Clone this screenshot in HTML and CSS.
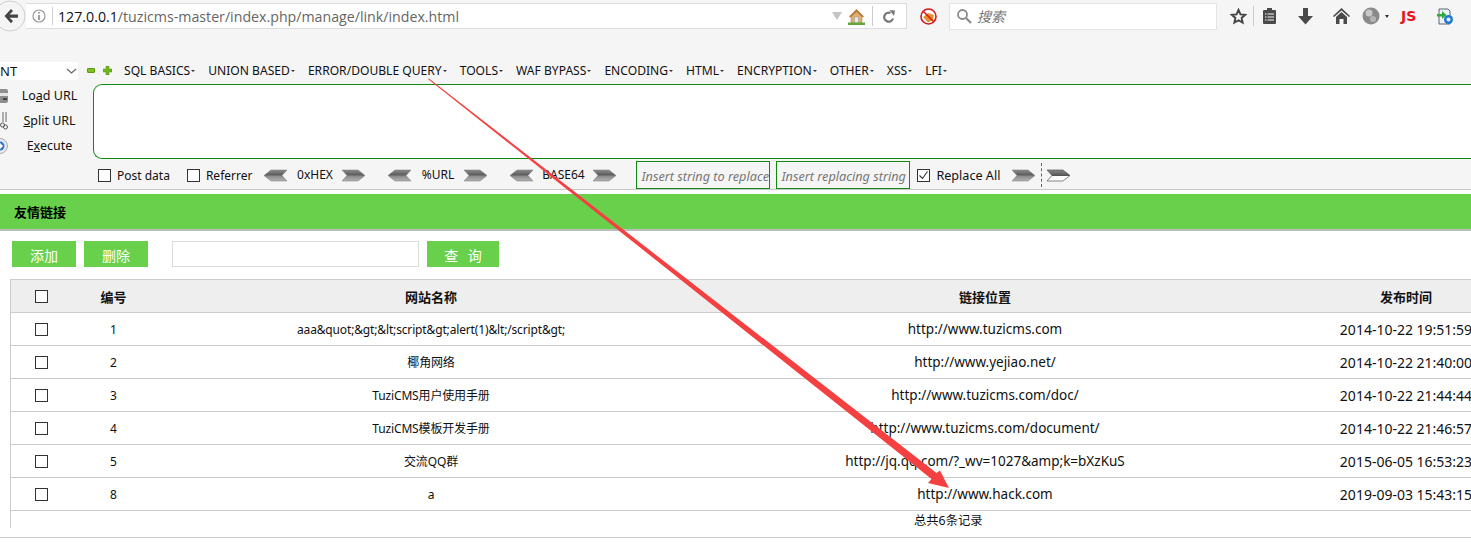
FILE: index.html
```html
<!DOCTYPE html>
<html lang="zh-CN">
<head>
	<meta charset="UTF-8">
	<title>友情链接</title>
	<link rel="stylesheet" href="styles.css">
</head>
<body>
	<svg class="defs" width="0" height="0">
		<defs>
			<linearGradient id="grey" x1="0" y1="0" x2="0" y2="1">
				<stop offset="0" stop-color="#8c8c8c"/>
				<stop offset="0.45" stop-color="#5c5c5c"/>
				<stop offset="0.55" stop-color="#8a8a8a"/>
				<stop offset="1" stop-color="#b4b4b4"/>
			</linearGradient>
			<linearGradient id="grey-white" x1="0" y1="0" x2="0" y2="1">
				<stop offset="0" stop-color="#888"/>
				<stop offset="0.5" stop-color="#555"/>
				<stop offset="0.55" stop-color="#fff"/>
				<stop offset="1" stop-color="#fff"/>
			</linearGradient>
			<symbol id="chev-r" viewBox="0 0 23 13"><path d="M0 1h16l7 5.500-7 5.500H0l5-5.500z" fill="url(#grey)" stroke="#777" stroke-width=".5"/></symbol>
			<symbol id="chev-l" viewBox="0 0 23 13"><path d="M23 1H7L0 6.500 7 12h16l-5-5.500z" fill="url(#grey)" stroke="#777" stroke-width=".5"/></symbol>
		</defs>
	</svg>

	<!-- browser bar -->
	<div class="navbar">
		<svg class="back" width="26" height="33" viewBox="0 0 26 33"><circle cx="10" cy="16" r="15" fill="#f5f5f5" stroke="#cfcfcf"/><path d="M11 9l2 2-3.500 3.500H18v3.200H9.500L13 21l-2 2.200L4.500 16z" fill="#444"/></svg>
		<div class="urlbar">
			<svg class="info" width="14" height="14" viewBox="0 0 14 14"><circle cx="7" cy="7" r="6" fill="none" stroke="#999" stroke-width="1.200"/><path d="M6.200 3h1.600v1.600H6.200zM6.200 6h1.600v5H6.200z" fill="#888"/></svg>
			<span class="sep"></span>
			<div class="url"><b>127.0.0.1</b>/tuzicms-master/index.php/manage/link/index.html</div>
			<span class="dropmark"></span>
			<svg class="house" width="17" height="17" viewBox="0 0 17 17"><path d="M8.500 1L1 8.500l1.500 1L8.500 4l6 5.500 1.500-1z" fill="#b9793a"/><path d="M3 9l5.500-5L14 9v6H3z" fill="#e0b070" stroke="#a87238" stroke-width=".5"/><rect x="6.500" y="9" width="4" height="6" fill="#e8e8e8" stroke="#888" stroke-width=".4"/><rect x="0" y="14.500" width="17" height="2.500" fill="#62a83e"/></svg>
			<span class="sep sep-tall"></span>
			<svg class="reload" width="12" height="13" viewBox="0 0 12 13"><path d="M10 8.500A4.500 4.500 0 1 1 7.500 3" fill="none" stroke="#777" stroke-width="2.200"/><path d="M6.500 0L12 .5 11 6z" fill="#777"/></svg>
		</div>
		<svg class="noscript" width="17" height="17" viewBox="0 0 17 17"><circle cx="8.500" cy="8.500" r="7.500" fill="#fff" stroke="#d81818" stroke-width="1.600"/><path d="M3 9l5-4 6 2-1 5-5 2.500z" fill="#e3902e"/><path d="M3.200 3.200l10.600 10.600" stroke="#d81818" stroke-width="1.500"/></svg>
		<div class="searchbar">
			<svg width="16" height="16" viewBox="0 0 16 16"><circle cx="6.500" cy="6.500" r="4.500" fill="none" stroke="#8a8a8a" stroke-width="1.800"/><path d="M10 10l5 5" stroke="#8a8a8a" stroke-width="2.200"/></svg>
			<span>搜索</span>
		</div>
		<div class="tools">
			<svg width="17" height="17" viewBox="0 0 18 18"><path d="M9 2l2.100 4.700 5 .5-3.800 3.300 1.100 5L9 13l-4.400 2.500 1.100-5L1.900 7.200l5-.5z" fill="none" stroke="#444" stroke-width="2"/></svg>
			<span class="tool-sep"></span>
			<svg class="t-list" width="15" height="16" viewBox="0 0 15 16"><path d="M1 3a1 1 0 0 1 1-1h3V0h5v2h3a1 1 0 0 1 1 1v12a1 1 0 0 1-1 1H2a1 1 0 0 1-1-1z" fill="#4a4a4a"/><path d="M3 6h9M3 9h9M3 12h9" stroke="#f5f5f5" stroke-width="1.200"/><path d="M5 5v8" stroke="#4a4a4a" stroke-width="1"/></svg>
			<svg class="t-down" width="15" height="17" viewBox="0 0 15 17"><path d="M5 0h5v8h5l-7.500 8.500L0 8h5z" fill="#4a4a4a"/></svg>
			<svg class="t-home" width="17" height="16" viewBox="0 0 17 16"><path d="M8.500 0L0 8l1 1 7.500-6.500L16 9l1-1z" fill="#4a4a4a"/><path d="M3 9l5.500-5L14 9v7h-3.500v-5h-4v5H3z" fill="#4a4a4a"/></svg>
			<svg class="t-globe" width="18" height="18" viewBox="0 0 18 18"><circle cx="9" cy="9" r="8.500" fill="#8a8a8a"/><circle cx="7" cy="6" r="3.500" fill="#c8c8c8"/><circle cx="11" cy="12" r="3" fill="#b4b4b4"/></svg>
			<span class="t-caret"></span>
			<span class="t-js">JS</span>
			<svg class="t-ie" width="16" height="17" viewBox="0 0 16 17"><path d="M2 1h9l2 2v13H2z" fill="#eef2f8" stroke="#567" stroke-width="1"/><circle cx="11.500" cy="11.500" r="4.500" fill="#1f78d0"/><circle cx="11.500" cy="11.500" r="2" fill="#e8f2ff"/><path d="M0 6h5V3l4.500 4L5 11V8.500H0z" fill="#35a83a"/></svg>
		</div>
	</div>

	<!-- hackbar -->
	<div class="hackbar">
		<div class="hack-menu">
			<div class="fake-select"><span>NT</span><svg width="11" height="6" viewBox="0 0 11 6"><path d="M1 1l4.500 4L10 1" fill="none" stroke="#666" stroke-width="1.200"/></svg></div>
			<span class="minus"></span>
			<svg class="plus" width="9" height="9" viewBox="0 0 9 9"><path d="M3 0h3v3h3v3H6v3H3V6H0V3h3z" fill="#6fb81e" stroke="#4c8a10" stroke-width=".5"/></svg>
			<ul class="menu">
				<li>SQL BASICS</li>
				<li>UNION BASED</li>
				<li>ERROR/DOUBLE QUERY</li>
				<li>TOOLS</li>
				<li>WAF BYPASS</li>
				<li>ENCODING</li>
				<li>HTML</li>
				<li>ENCRYPTION</li>
				<li>OTHER</li>
				<li>XSS</li>
				<li>LFI</li>
			</ul>
		</div>
		<div class="hack-main">
			<div class="hack-side">
				<div class="side-row">
					<svg width="9" height="16" viewBox="0 0 9 16"><rect x="-8" y="1" width="16" height="14" rx="2" fill="#8e8e8e"/><rect x="-8" y="5" width="16" height="3" fill="#e4e4e4"/><rect x="3" y="10" width="4" height="2" fill="#444"/></svg>
					<span class="side-label">Lo<u>a</u>d URL</span>
				</div>
				<div class="side-row">
					<svg width="9" height="18" viewBox="0 0 9 18"><path d="M3 0v10M6 0v10" stroke="#666" stroke-width="1"/><circle cx="2.500" cy="13" r="2" fill="none" stroke="#555"/><circle cx="5.500" cy="15" r="2" fill="none" stroke="#555"/></svg>
					<span class="side-label"><u>S</u>plit URL</span>
				</div>
				<div class="side-row">
					<svg width="9" height="16" viewBox="0 0 9 16"><circle cx="0" cy="8" r="7.500" fill="#e6ebf2" stroke="#aab"/><circle cx="0" cy="8" r="4.500" fill="#3b78c4"/><path d="M0 5l3 3-3 3z" fill="#fff"/></svg>
					<span class="side-label">E<u>x</u>ecute</span>
				</div>
			</div>
			<div class="hack-input"></div>
		</div>
		<div class="hack-opts">
			<label class="opt"><span class="check"></span>Post data</label>
			<label class="opt opt-ref"><span class="check"></span>Referrer</label>
			<svg class="chev first" width="23" height="13"><use href="#chev-l"/></svg>
			<span class="enc enc-hex">0xHEX</span>
			<svg class="chev" width="23" height="13"><use href="#chev-r"/></svg>
			<svg class="chev gap-l" width="23" height="13"><use href="#chev-l"/></svg>
			<span class="enc enc-url">%URL</span>
			<svg class="chev" width="23" height="13"><use href="#chev-r"/></svg>
			<svg class="chev gap-l" width="23" height="13"><use href="#chev-l"/></svg>
			<span class="enc enc-b64">BASE64</span>
			<svg class="chev" width="23" height="13"><use href="#chev-r"/></svg>
			<div class="rep rep-a">Insert string to replace</div>
			<div class="rep rep-b">Insert replacing string</div>
			<label class="opt opt-all"><span class="check"><svg width="11" height="11" viewBox="0 0 11 11"><path d="M1.500 5.500l3 3 5-7" fill="none" stroke="#333" stroke-width="1.100"/></svg></span>Replace All</label>
			<svg class="chev gap-all" width="23" height="13"><use href="#chev-r"/></svg>
			<span class="dash"></span>
			<svg class="chev" width="23" height="13" viewBox="0 0 23 13"><path d="M0 1h16l7 5.500-7 5.500H0l5-5.500z" fill="url(#grey-white)" stroke="#555" stroke-width=".7"/></svg>
		</div>
	</div>

	<!-- page -->
	<div class="title-bar">友情链接</div>
	<div class="actions">
		<button class="btn">添加</button>
		<button class="btn">删除</button>
		<div class="search-box"></div>
		<button class="btn btn-query">查 询</button>
	</div>

	<div class="list-wrap">
		<table class="list">
			<colgroup>
				<col class="c-check"><col class="c-num"><col class="c-name"><col class="c-link"><col class="c-time">
			</colgroup>
			<thead>
				<tr>
					<th><span class="check"></span></th>
					<th>编号</th>
					<th>网站名称</th>
					<th>链接位置</th>
					<th>发布时间</th>
				</tr>
			</thead>
			<tbody>
				<tr><td><span class="check"></span></td><td>1</td><td>aaa&amp;quot;&amp;gt;&amp;lt;script&amp;gt;alert(1)&amp;lt;/script&amp;gt;</td><td>http://www.tuzicms.com</td><td>2014-10-22 19:51:59</td></tr>
				<tr><td><span class="check"></span></td><td>2</td><td>椰角网络</td><td>http://www.yejiao.net/</td><td>2014-10-22 21:40:00</td></tr>
				<tr><td><span class="check"></span></td><td>3</td><td>TuziCMS用户使用手册</td><td>http://www.tuzicms.com/doc/</td><td>2014-10-22 21:44:44</td></tr>
				<tr><td><span class="check"></span></td><td>4</td><td>TuziCMS模板开发手册</td><td>http://www.tuzicms.com/document/</td><td>2014-10-22 21:46:57</td></tr>
				<tr><td><span class="check"></span></td><td>5</td><td>交流QQ群</td><td>http://jq.qq.com/?_wv=1027&amp;amp;k=bXzKuS</td><td>2015-06-05 16:53:23</td></tr>
				<tr><td><span class="check"></span></td><td>8</td><td>a</td><td>http://www.hack.com</td><td>2019-09-03 15:43:15</td></tr>
			</tbody>
		</table>
	</div>
	<div class="pager">总共6条记录</div>
	<div class="page-end"></div>

	<svg class="annot" width="1471" height="544" viewBox="0 0 1471 544">
		<path d="M428 79L429 78.500 936.500 473 940 470.500 949 488 928 483 931.500 479z" fill="#f44040"/>
	</svg>
</body>
</html>
```

FILE: styles.css
```css
html, body {
	margin: 0;
	padding: 0;
	width: 1471px;
	height: 544px;
	overflow: hidden;
	background: #fff;
	font-family: "Noto Sans", "Noto Sans CJK SC", sans-serif;
	font-size: 12px;
	color: #111;
}

.defs {
	display: block;
	height: 0;
}

/* browser bar */
.navbar {
	display: flex;
	align-items: center;
	height: 32px;
	padding-bottom: 1px;
	background: #f5f5f5;
}

.back {
	flex: none;
}

.urlbar {
	display: flex;
	align-items: center;
	flex: none;
	width: 881px;
	height: 26px;
	background: #fff;
	border: 1px solid #dcdcdc;
	border-left: 0;
	box-sizing: border-box;
}

.info {
	margin-left: 6px;
}

.sep {
	width: 1px;
	height: 18px;
	margin: 0 5px 0 6px;
	background: #ccc;
}

.sep-tall {
	height: 20px;
	margin: 0 10px 0 7px;
}

.url {
	flex: 1;
	font-family: "Open Sans", "Noto Sans", sans-serif;
	font-size: 14.200px;
	color: #666;
	white-space: nowrap;
}

.url b {
	font-weight: 400;
	color: #111;
}

.dropmark {
	width: 0;
	height: 0;
	margin-right: 6px;
	border-left: 5px solid transparent;
	border-right: 5px solid transparent;
	border-top: 8px solid #c4c4c4;
}

.reload {
	margin-right: 11px;
}

.noscript {
	flex: none;
	margin-left: 13px;
}

.searchbar {
	display: flex;
	align-items: center;
	flex: none;
	gap: 5px;
	width: 268px;
	height: 27px;
	margin-left: 12px;
	padding-left: 6px;
	box-sizing: border-box;
	background: #fff;
	border: 1px solid #e4e4e4;
	color: #777;
	font-style: italic;
	font-size: 14px;
}

.tools {
	display: flex;
	align-items: center;
	flex: none;
	margin-left: 13px;
}

.tool-sep {
	width: 1px;
	height: 20px;
	margin: 0 8px 0 6px;
	background: #ccc;
}

.t-down { margin-left: 21px; }
.t-home { margin-left: 20px; }
.t-globe { margin-left: 12px; }

.t-caret {
	margin-left: 5px;
	border-left: 2px solid transparent;
	border-right: 2px solid transparent;
	border-top: 3px solid #333;
}

.t-js {
	margin-left: 12px;
	color: #e8141c;
	font-weight: 700;
	font-size: 14px;
	font-family: "DejaVu Sans", sans-serif;
}

.t-ie { margin-left: 21px; }

/* hackbar */
.hackbar {
	height: 156px;
	background: #f5f5f5;
	border-bottom: 1px solid #c8c8c8;
}

.hack-menu {
	display: flex;
	align-items: center;
	height: 19px;
	padding-top: 28px;
}

.fake-select {
	display: flex;
	align-items: center;
	justify-content: space-between;
	width: 78px;
	height: 18px;
	padding-right: 1px;
	box-sizing: border-box;
	background: #fff;
	font-size: 13px;
}

.minus {
	width: 6px;
	height: 3px;
	margin-left: 9px;
	background: #7cc21e;
	border: 1px solid #5c9a12;
	border-radius: 1px;
}

.plus { margin-left: 8px; }

.menu {
	display: flex;
	gap: 13px;
	margin: 0 0 0 12px;
	padding: 0;
	list-style: none;
	white-space: nowrap;
	font-size: 12.100px;
}

.menu li {
	display: flex;
	align-items: center;
	gap: 1px;
}

.menu li::after {
	content: "";
	border-left: 2px solid transparent;
	border-right: 2px solid transparent;
	border-top: 2px solid #333;
	margin-top: 1px;
}

.hack-main {
	display: flex;
	height: 75px;
	margin-top: 4px;
}

.hack-side {
	flex: none;
	display: flex;
	flex-direction: column;
	width: 93px;
	margin-top: -1px;
}

.side-row {
	display: flex;
	align-items: center;
	justify-content: space-between;
	height: 25px;
}

.side-label {
	width: 81px;
	margin-right: 3px;
	text-align: center;
	font-size: 12.500px;
}

.hack-input {
	flex: 1;
	background: #fff;
	border: 1px solid #128a12;
	border-right: 0;
	border-radius: 9px 0 0 9px;
}

.hack-opts {
	display: flex;
	align-items: center;
	height: 29px;
	margin-top: 1px;
	padding-left: 98px;
}

.check {
	display: inline-flex;
	align-items: center;
	justify-content: center;
	width: 13px;
	height: 13px;
	background: #fff;
	border: 1px solid #333;
	box-sizing: border-box;
	vertical-align: middle;
}

.opt {
	display: flex;
	align-items: center;
	gap: 6px;
	margin-top: 2px;
}

.opt-ref { margin-left: 17px; }

.chev {
	flex: none;
	display: block;
	margin-top: 2px;
}

.first { margin-left: 12px; }
.gap-l { margin-left: 23px; }

.enc {
	width: 55px;
	text-align: center;
}

.enc-url { width: 53px; }
.enc-b64 { width: 60px; }

.rep {
	flex: none;
	height: 28px;
	line-height: 28px;
	box-sizing: border-box;
	width: 134px;
	padding-left: 4px;
	border: 1px solid #128a12;
	color: #777;
	font-style: italic;
	font-size: 12.700px;
	white-space: nowrap;
	overflow: hidden;
}

.rep-a { margin-left: 20px; }
.rep-b { margin-left: 6px; }
.opt-all { margin-left: 7px; font-size: 12.600px; }
.gap-all { margin-left: 12px; }

.dash {
	flex: none;
	height: 24px;
	margin: 0 5px 0 6px;
	border-left: 1px dashed #666;
}

/* page content */
.title-bar {
	height: 35px;
	margin-top: 4px;
	padding-left: 14px;
	background: #69d04b;
	border-bottom: 2px solid #bcbcbc;
	line-height: 37px;
	font-size: 13px;
	font-weight: 700;
	color: #000;
}

.actions {
	display: flex;
	height: 26px;
	margin-top: 10px;
	padding-left: 12px;
}

.btn {
	width: 64px;
	height: 26px;
	margin: 0 8px 0 0;
	padding: 2px 0 0;
	background: #69d04b;
	border: 0;
	color: #fff;
	font-family: inherit;
	font-size: 14px;
}

.search-box {
	width: 247px;
	height: 26px;
	margin: 0 8px 0 16px;
	box-sizing: border-box;
	background: #fff;
	border: 1px solid #dcdcdc;
}

.btn-query {
	width: 72px;
	word-spacing: 6px;
}

.list-wrap {
	margin: 12px 0 0 10px;
	overflow: hidden;
}

.list {
	width: 1537px;
	table-layout: fixed;
	border-collapse: separate;
	border-spacing: 0;
	border-left: 1px solid #ccc;
}

.c-check { width: 60px; }
.c-num { width: 85px; }
.c-name { width: 550px; }
.c-link { width: 558px; }
.c-time { width: 284px; }

.list th, .list td {
	height: 32px;
	padding: 0;
	text-align: center;
	border-bottom: 1px solid #ccc;
	white-space: nowrap;
}

.list .check {
	display: block;
	margin: 0 auto;
}

.list th {
	background: #eee;
	border-top: 1px solid #ccc;
	font-size: 13px;
	font-weight: 700;
}

.list td:nth-child(3) {
	letter-spacing: -0.150px;
}

.list td:nth-child(4) {
	font-size: 13.500px;
}

.list td:nth-child(5) {
	font-size: 14px;
}

.pager {
	height: 17px;
	margin-left: 10px;
	border-left: 1px solid #ccc;
	line-height: 20px;
	font-size: 12.300px;
	padding-left: 903px;
}

.page-end {
	margin-top: 9px;
	border-top: 1px solid #ccc;
}

.annot {
	position: absolute;
	left: 0;
	top: 0;
	pointer-events: none;
}
```
